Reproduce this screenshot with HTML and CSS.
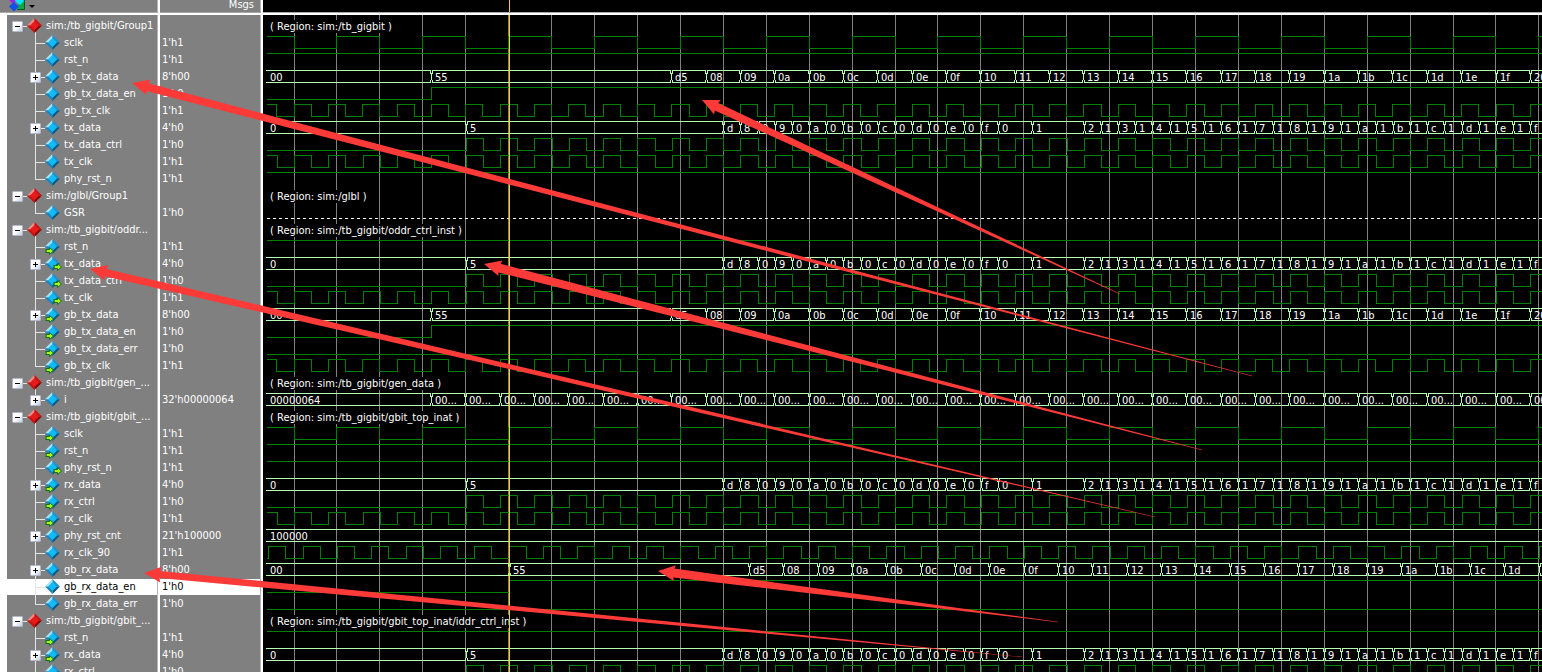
FILE: index.html
```html
<!DOCTYPE html>
<html lang="en">
<head>
<meta charset="utf-8">
<title>Wave</title>
<link rel="stylesheet" href="styles.css">
</head>
<body>
<main class="viewer">
  <section class="pane names" aria-label="Signals">
    <header class="head">
      <button class="menu" type="button" aria-label="Wave format">
        <svg width="26" height="12" viewBox="0 0 26 12">
          <path d="M10 0h6v9H8z" fill="#12a84a"/>
          <path d="M15.500 0v9.500H8" fill="none" stroke="#0a5a20"/>
          <path d="M0 0h9L4 4z" fill="#a020e0"/>
          <path d="M6 0h8l1 1-4 4-5-4z" fill="#00e8ff"/>
          <path d="M5 2l5 4.500-5 5-5-5z" fill="#1450e8"/>
          <path d="M20 5h6l-3 3z" fill="#000"/>
        </svg>
      </button>
    </header>
    <div class="list" id="names"></div>
  </section>
  <section class="pane values" aria-label="Values">
    <header class="head head-right">Msgs</header>
    <div class="list" id="values"></div>
  </section>
  <section class="pane waves" aria-label="Waveforms">
    <header class="head head-wave"><svg class="head-svg"><path class="cursor" d="M246.500 0V12"/></svg></header>
    <svg id="wave" class="wave" role="img" aria-label="Waveform traces"></svg>
  </section>
  <svg id="notes" class="notes" aria-hidden="true"></svg>
</main>
<script src="wave.js"></script>
</body>
</html>
```
FILE: styles.css
```css
* { box-sizing: border-box; }

body {
  margin: 0;
  background: #fff;
  color: #fff;
  font: 11px/17px "DejaVu Sans Condensed", "Noto Sans", sans-serif;
}

.viewer {
  position: relative;
  display: flex;
  height: 100vh;
  overflow: hidden;
}

.pane { display: flex; flex-direction: column; flex: none; }
.names { width: 160px; border-right: 2px solid #fff; }
.values { width: 103px; border-right: 2px solid #fff; }
.waves { flex: 1; min-width: 0; background: #000; }

.head {
  display: flex;
  flex: none;
  height: 15px;
  border-bottom: 2px solid #fff;
  box-shadow: inset 0 -1px #a8a8a8, inset -1px 0 #b4b4b4;
  background: #808080;
  line-height: 10px;
}
.head-right { justify-content: flex-end; padding-right: 7px; }
.head-wave { background: #000; box-shadow: inset 0 -1px #a8a8a8; }
.head-svg { width: 100%; height: 12px; }

.menu {
  display: flex;
  margin: 0 0 0 9px;
  padding: 0;
  border: 0;
  background: none;
}

.list {
  flex: none;
  padding-top: 2px;
  background: #808080;
  box-shadow: inset -1px 0 #b4b4b4;
}
.names .list { margin-left: 7px; }

.row {
  display: flex;
  height: 17px;
  margin-right: 1px;
  white-space: nowrap;
}
.values .row { padding-left: 2px; }
.selected {
  border-top: 1px solid #808080;
  background: #fff;
  color: #000;
  line-height: 15px;
}

.branch {
  flex: none;
  width: 15px;
  height: 17px;
  margin-left: 23px;
  background:
    linear-gradient(#e4e4e4, #e4e4e4) 5px 0 / 1px 17px no-repeat,
    linear-gradient(#e4e4e4, #e4e4e4) 5px 9px / 10px 1px no-repeat;
}
.last {
  background:
    linear-gradient(#e4e4e4, #e4e4e4) 5px 0 / 1px 9px no-repeat,
    linear-gradient(#e4e4e4, #e4e4e4) 5px 9px / 10px 1px no-repeat;
}
.selected .branch { margin-top: -1px; }
.root {
  width: 15px;
  margin-left: 5px;
  background: linear-gradient(#e4e4e4, #e4e4e4) 5px 9px / 10px 1px no-repeat;
}

.toggle {
  display: block;
  width: 11px;
  height: 11px;
  margin: 4px 0 0;
  padding: 0;
  border: 1px solid #b0b8cc;
  border-radius: 1px;
  background: linear-gradient(135deg, #fff 50%, #c4cce0);
}
.toggle svg { display: block; }

.gem { flex: none; width: 15px; height: 17px; margin-right: 4px; }
.gem-signal { width: 17px; margin-right: 2px; }
.selected .gem { margin-top: -1px; }

.wave { flex: none; display: block; width: 100%; height: 657px; font-size: 11px; }
.wave path, .head-svg path { fill: none; shape-rendering: crispEdges; }
.wave text { fill: #fff; white-space: pre; }
.grid { stroke: #808080; }
.logic { stroke: #008000; }
.bus { stroke: #b4ffb4; }
.undriven { stroke: #fff; stroke-dasharray: 3 3; }
.cursor { stroke: #ffd018; }
.plate { fill: #000; }

.notes {
  position: absolute;
  inset: 0;
  width: 100%;
  height: 100%;
  pointer-events: none;
  fill: #fc3a38;
}
```
FILE: wave.js
```js
const ROW = 17;
const T = 34.34;
const END = 1600;

// Vertical grid lines; the system clock toggles on each of them.
const grid = [31, 73, 116, 159, 202, 245, 288, 331, 374, 417, 460, 503, 546, 589, 632, 674,
  717, 760, 803, 846, 889, 932, 975, 1018, 1061, 1104, 1147, 1190, 1232, 1275];
const gb = k => Math.floor(31.1 + T * k);
const tx = k => Math.floor(31.45 + T / 2 * k);
const rx = k => Math.floor(5.75 + T * k);

const clock = (at, step, from, to) => {
  const edges = [];
  for (let k = from; k <= to; k++) edges.push(at(k * step));
  return edges;
};

const bytes = (at, start) => {
  const list = [[at(start), '55'], [at(start + 7), 'd5']];
  for (let v = 8; v <= 32; v++) list.push([at(start + v), v.toString(16).padStart(2, '0')]);
  return list;
};
const nibbles = [[tx(10), '5']];
['d', '8', '0', '9', '0', 'a', '0', 'b', '0', 'c', '0', 'd', '0', 'e', '0', 'f', '0']
  .forEach((v, i) => nibbles.push([tx(25 + i), v]));
nibbles.push([tx(43), '1']);
for (let v = 2; v < 16; v++) {
  nibbles.push([tx(42 + 2 * v), v.toString(16)]);
  nibbles.push([tx(43 + 2 * v), '1']);
}
const counts = [];
for (let k = 4; k <= 36; k++) counts.push([gb(k), '00...']);

const hi = { level: 1, edges: [] };
const lo = { level: 0, edges: [] };
const sclk = { level: 1, edges: grid };
const gbClk = { level: 1, edges: clock(gb, 0.5, -1, 74) };
const txClk = { level: 1, edges: clock(tx, 1, -1, 74) };
const txCtrl = { level: 0, edges: clock(tx, 1, 10, 74) };
const rxClk = { level: 0, edges: clock(rx, 0.5, 0, 76) };
const gbEn = { level: 0, edges: [gb(4)] };
const rxEn = { level: 0, edges: [rx(7)] };
const gbBus = { first: '00', bus: bytes(gb, 4) };
const txBus = { first: '0', bus: nibbles };

// name, value, trace, port direction, expandable, selected
const rows = [
  ['sim:/tb_gigbit/Group1', 'sim:/tb_gigbit'],
  ['sclk', "1'h1", sclk], ['rst_n', "1'h1", hi], ['gb_tx_data', "8'h00", gbBus, '', 1],
  ['gb_tx_data_en', "1'h0", gbEn], ['gb_tx_clk', "1'h1", gbClk], ['tx_data', "4'h0", txBus, '', 1],
  ['tx_data_ctrl', "1'h0", txCtrl], ['tx_clk', "1'h1", txClk], ['phy_rst_n', "1'h1", hi],
  ['sim:/glbl/Group1', 'sim:/glbl'],
  ['GSR', "1'h0", { undriven: true }],
  ['sim:/tb_gigbit/oddr...', 'sim:/tb_gigbit/oddr_ctrl_inst'],
  ['rst_n', "1'h1", hi, 'in'], ['tx_data', "4'h0", txBus, 'out', 1], ['tx_data_ctrl', "1'h0", txCtrl, 'out'],
  ['tx_clk', "1'h1", txClk, 'out'], ['gb_tx_data', "8'h00", gbBus, 'in', 1], ['gb_tx_data_en', "1'h0", gbEn, 'in'],
  ['gb_tx_data_err', "1'h0", lo, 'in'], ['gb_tx_clk', "1'h1", gbClk, 'in'],
  ['sim:/tb_gigbit/gen_...', 'sim:/tb_gigbit/gen_data'],
  ['i', "32'h00000064", { first: '00000064', bus: counts }, '', 1],
  ['sim:/tb_gigbit/gbit_...', 'sim:/tb_gigbit/gbit_top_inat'],
  ['sclk', "1'h1", sclk, 'in'], ['rst_n', "1'h1", hi, 'in'], ['phy_rst_n', "1'h1", hi, 'out'],
  ['rx_data', "4'h0", txBus, 'in', 1], ['rx_ctrl', "1'h0", txCtrl, 'in'], ['rx_clk', "1'h1", txClk, 'in'],
  ['phy_rst_cnt', "21'h100000", { first: '100000', bus: [] }, '', 1], ['rx_clk_90', "1'h1", rxClk],
  ['gb_rx_data', "8'h00", { first: '00', bus: bytes(rx, 7) }, '', 1],
  ['gb_rx_data_en', "1'h0", rxEn, '', 0, 1], ['gb_rx_data_err', "1'h0", lo],
  ['sim:/tb_gigbit/gbit_...', 'sim:/tb_gigbit/gbit_top_inat/iddr_ctrl_inst'],
  ['rst_n', "1'h1", hi, 'in'], ['rx_data', "4'h0", txBus, 'in', 1], ['rx_ctrl', "1'h0", txCtrl, 'in']
];

const gem = (cx, c) => `
  <path d="M${cx - 7.5} 8.5l7.500-7.500v4l-3.500 3.500z" fill="${c[0]}"/>
  <path d="M${cx} 1l7.500 7.500h-4L${cx} 5z" fill="${c[1]}"/>
  <path d="M${cx - 7.5} 8.500L${cx} 16v-4l-3.500-3.500z" fill="${c[2]}"/>
  <path d="M${cx} 16l7.500-7.500h-4L${cx} 12z" fill="${c[3]}"/>
  <path d="M${cx} 4l4.500 4.500-4.500 4.500-4.500-4.500z" fill="${c[4]}"/>`;
const blue = ['#a4e4fa', '#2490cc', '#1a84c0', '#085884', '#10bcf8'];
const red = ['#f88888', '#c81414', '#cc1010', '#8c0404', '#e61c1c'];
const port = dir => dir ? `<path transform="translate(${dir === 'in' ? 0 : 8} ${dir === 'in' ? 0 : -1})"
  d="M.5 11.500h4v-2l4 3.500-4 3.500v-2h-4l1-1.500z" fill="#a4f81c" stroke="#14701c"/>` : '';

const toggle = open => `<button class="toggle" type="button" aria-label="${open ? 'Collapse' : 'Expand'}">
<svg width="9" height="9"><path d="M2 4h5v1H2z${open ? '' : 'M4 2h1v5H4z'}" fill="#000"/></svg></button>`;

let names = '', values = '', art = '';

grid.forEach(x => { art += `<path class="grid" d="M${x + 0.5} 0V660"/>`; });

const logic = (y, s) => {
  let level = s.level, d = `M4 ${y + (level ? 2.5 : 14.5)}`;
  s.edges.forEach(x => {
    level = 1 - level;
    d += `H${x + 0.5}V${y + (level ? 2.5 : 14.5)}`;
  });
  return `<path class="logic" d="${d}H${END}"/>`;
};

const bus = (y, s) => {
  const t = y + 2.5, b = y + 14.5;
  let d = '', x0 = 3, label = `<text x="7" y="${y + 13}">${s.first}</text>`;
  s.bus.forEach(([x, v]) => {
    d += `M${x0} ${t}H${x}M${x0} ${b}H${x}M${x - 0.5} ${t}v3M${x + 1.5} ${t}v3`
      + `M${x + 0.5} ${t + 2.5}v7M${x - 0.5} ${b}v-3M${x + 1.5} ${b}v-3`;
    x0 = x + 1;
    label += `<text x="${x + 4}" y="${y + 13}">${v}</text>`;
  });
  return `<path class="bus" d="${d}M${x0} ${t}H${END}M${x0} ${b}H${END}"/>${label}`;
};

rows.forEach(([name, value, trace, dir, expandable, selected], i) => {
  const y = 2 + i * ROW;
  const cls = selected ? 'row selected' : 'row';
  if (!trace) {
    names += `<div class="row"><span class="branch root">${toggle(true)}</span><svg class="gem">
      <path d="M8 15h1v2H8z" fill="#e4e4e4"/>${gem(7.5, red)}</svg>${name}</div>`;
    values += '<div class="row"></div>';
    art += `<text class="region" x="7" y="${y + 13}">( Region: ${value} )</text>`;
    return;
  }
  const last = rows[i + 1] && !rows[i + 1][2] ? ' last' : '';
  names += `<div class="${cls}"><span class="branch${last}">${expandable ? toggle(false) : ''}</span>
    <svg class="gem gem-signal">${gem(7.5, blue)}${port(dir)}</svg>${name}</div>`;
  values += `<div class="${cls}">${value}</div>`;
  if (trace.undriven) art += `<path class="undriven" d="M4 ${y + 14.5}H${END}"/>`;
  else art += trace.bus ? bus(y, trace) : logic(y, trace);
});

document.getElementById('names').innerHTML = names;
document.getElementById('values').innerHTML = values;

const wave = document.getElementById('wave');
wave.innerHTML = art + '<path class="cursor" d="M246.500 0V660"/>';

// Region titles hide the grid behind them.
wave.querySelectorAll('.region').forEach(text => {
  const box = text.getBBox();
  const plate = document.createElementNS('http://www.w3.org/2000/svg', 'rect');
  plate.setAttribute('class', 'plate');
  plate.setAttribute('x', box.x);
  plate.setAttribute('y', Math.round(box.y));
  plate.setAttribute('width', box.width);
  plate.setAttribute('height', 13);
  text.before(plate);
});

// tip x, tip y, tail x, tail y, half width of the shaft
const arrows = [
  [132, 83, 1252, 376, 4], [702, 100, 1120, 294, 4], [484, 264, 1202, 450, 4.5],
  [90, 269, 1155, 517, 3.8], [144, 573, 1022, 657, 3.6], [658, 571, 1058, 622, 4.5]
];
document.getElementById('notes').innerHTML = arrows.map(([x, y, tailX, tailY, w]) => {
  const len = Math.hypot(tailX - x, tailY - y);
  const ux = (tailX - x) / len, uy = (tailY - y) / len;
  const at = (a, b) => `${(x + ux * a - uy * b).toFixed(1)},${(y + uy * a + ux * b).toFixed(1)}`;
  return `<polygon points="${at(0, 0)} ${at(17, 8)} ${at(16, w)} ${at(len, 0.2)} ${at(len, -0.2)} ${at(16, -w)} ${at(17, -8)}"/>`;
}).join('');
```
